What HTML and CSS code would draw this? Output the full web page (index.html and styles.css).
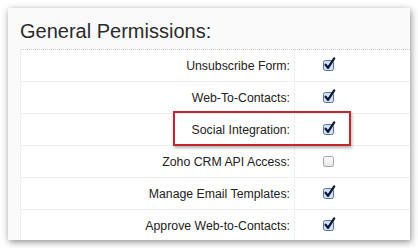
FILE: index.html
```html
<!DOCTYPE html>
<html lang="en">
<head>
    <meta charset="UTF-8">
    <title>General Permissions</title>
    <link rel="stylesheet" href="styles.css">
</head>
<body>
    <div class="card">
        <h2 class="title">General Permissions:</h2>
        <table class="perms">
            <tr>
                <td class="label">Unsubscribe Form:</td>
                <td class="check"><svg class="cb" width="14" height="14" viewBox="0 0 14 14"><rect x="0.5" y="3.5" width="10" height="10" rx="2" fill="#cfe2f7" stroke="#5b7396"/><path d="M2.6 7.8 L5 10.8 L11.2 1.4" fill="none" stroke="#0e1a33" stroke-width="2.3" stroke-linecap="round" stroke-linejoin="round"/></svg></td>
            </tr>
            <tr>
                <td class="label">Web-To-Contacts:</td>
                <td class="check"><svg class="cb" width="14" height="14" viewBox="0 0 14 14"><rect x="0.5" y="3.5" width="10" height="10" rx="2" fill="#cfe2f7" stroke="#5b7396"/><path d="M2.6 7.8 L5 10.8 L11.2 1.4" fill="none" stroke="#0e1a33" stroke-width="2.3" stroke-linecap="round" stroke-linejoin="round"/></svg></td>
            </tr>
            <tr>
                <td class="label">Social Integration:</td>
                <td class="check"><svg class="cb" width="14" height="14" viewBox="0 0 14 14"><rect x="0.5" y="3.5" width="10" height="10" rx="2" fill="#cfe2f7" stroke="#5b7396"/><path d="M2.6 7.8 L5 10.8 L11.2 1.4" fill="none" stroke="#0e1a33" stroke-width="2.3" stroke-linecap="round" stroke-linejoin="round"/></svg></td>
            </tr>
            <tr>
                <td class="label">Zoho CRM API Access:</td>
                <td class="check"><svg class="cb" width="14" height="14" viewBox="0 0 14 14"><defs><linearGradient id="off" x1="0" y1="0" x2="0" y2="1"><stop offset="0" stop-color="#ffffff"/><stop offset="1" stop-color="#e6e6e6"/></linearGradient></defs><rect x="0.5" y="3.5" width="10" height="10" rx="2" fill="url(#off)" stroke="#a3a3a3"/></svg></td>
            </tr>
            <tr>
                <td class="label">Manage Email Templates:</td>
                <td class="check"><svg class="cb" width="14" height="14" viewBox="0 0 14 14"><rect x="0.5" y="3.5" width="10" height="10" rx="2" fill="#cfe2f7" stroke="#5b7396"/><path d="M2.6 7.8 L5 10.8 L11.2 1.4" fill="none" stroke="#0e1a33" stroke-width="2.3" stroke-linecap="round" stroke-linejoin="round"/></svg></td>
            </tr>
            <tr>
                <td class="label">Approve Web-to-Contacts:</td>
                <td class="check"><svg class="cb" width="14" height="14" viewBox="0 0 14 14"><rect x="0.5" y="3.5" width="10" height="10" rx="2" fill="#cfe2f7" stroke="#5b7396"/><path d="M2.6 7.8 L5 10.8 L11.2 1.4" fill="none" stroke="#0e1a33" stroke-width="2.3" stroke-linecap="round" stroke-linejoin="round"/></svg></td>
            </tr>
        </table>
        <div class="highlight"></div>
    </div>
</body>
</html>
```

FILE: styles.css
```css
body {
    margin: 0;
    background: #fff;
    font-family: "Liberation Sans", Arial, sans-serif;
}
.card {
    position: relative;
    margin: 8px;
    width: 402px;
    height: 232px;
    overflow: hidden;
    background: #fafafa;
    box-shadow: 1px 2px 7px rgba(0, 0, 0, 0.45);
}
.title {
    margin: 0;
    padding: 11px 0 6px 12px;
    font-size: 20px;
    line-height: 24px;
    font-weight: normal;
    color: #2b2b2b;
}
.perms {
    margin-left: 12px;
    width: 390px;
    border-collapse: collapse;
    background: #fff;
    border-top: 1px dotted #c8c8c8;
    border-left: 1px solid #efefef;
}
.perms td {
    height: 31px;
    padding: 0;
    border-bottom: 1px solid #efefef;
}
.label {
    width: 269px;
    padding-right: 4px !important;
    text-align: right;
    font-size: 12.3px;
    color: #222;
    border-right: 1px solid #efefef;
}
.check {
    padding-left: 28px !important;
}
.cb {
    display: block;
    margin-top: -3px;
}
.highlight {
    position: absolute;
    left: 165px;
    top: 103px;
    width: 174px;
    height: 31px;
    border: 2px solid #c1272d;
    box-shadow: 1px 2px 3px rgba(0, 0, 0, 0.3);
}
```
